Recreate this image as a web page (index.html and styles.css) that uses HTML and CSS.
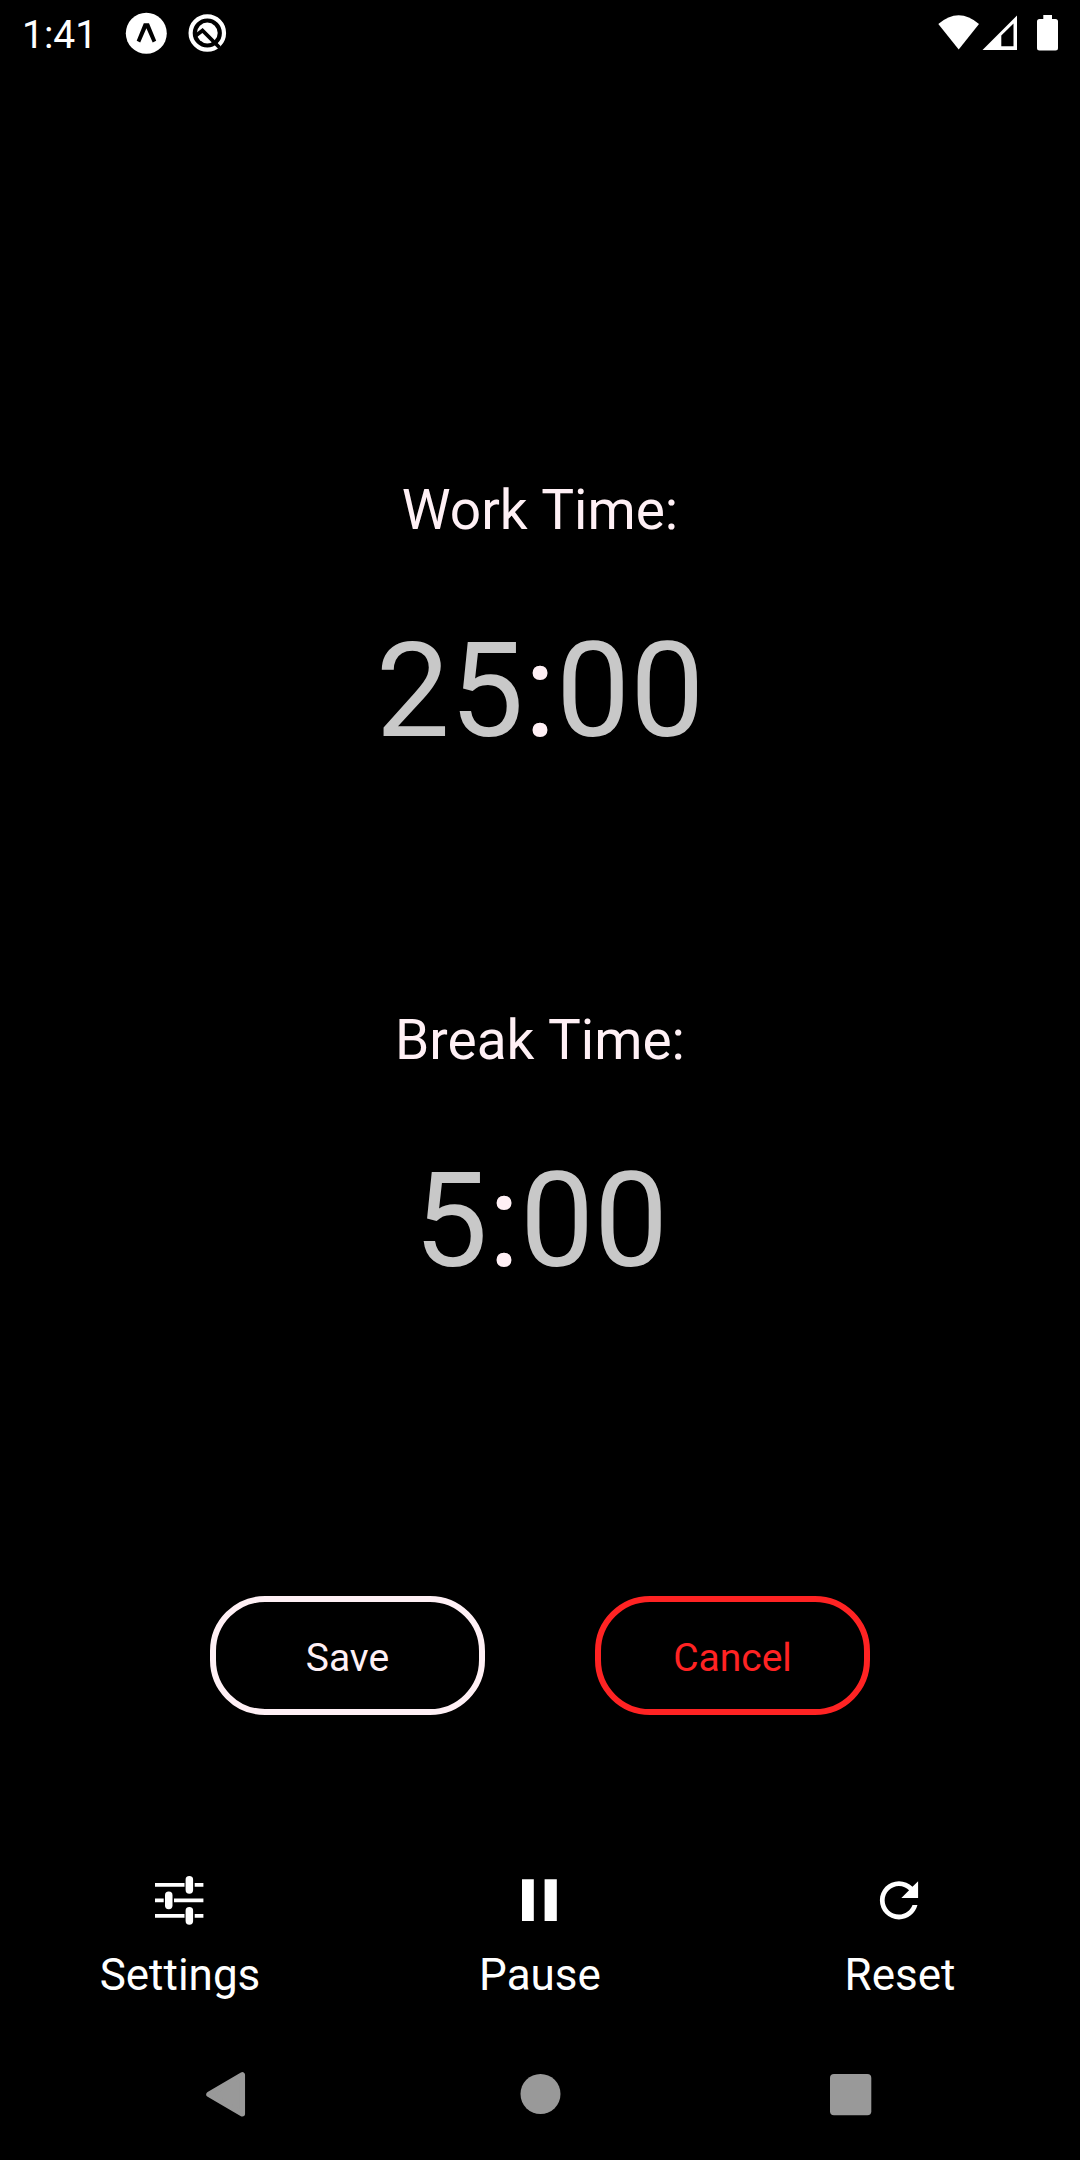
FILE: index.html
```html
<!DOCTYPE html>
<html lang="en">
<head>
<meta charset="utf-8">
<title>Timer settings</title>
<link rel="stylesheet" href="styles.css">
</head>
<body>
<div class="screen">
  <header class="status">
    <span class="clock">1:41</span>
    <svg class="notices" width="120" height="68" viewBox="120 0 120 68">
      <circle cx="146.3" cy="33.3" r="20.5" fill="#fff"/>
      <path d="M143.800 23.300h5.200L156.200 40.800L152.700 42.400L146.400 28.300L140.200 42.400L136.700 40.800z" fill="#000"/>
      <circle cx="207.3" cy="33" r="16.7" fill="none" stroke="#fff" stroke-width="4.2"/>
      <circle cx="207.3" cy="33" r="10.4" fill="#fff"/>
      <path d="M196 35.500L202.500 30.500L219.500 47.500" fill="none" stroke="#000" stroke-width="3.800"/>
    </svg>
    <svg class="system" width="130" height="68" viewBox="930 0 130 68">
      <path d="M938.3 24Q958.7 6.5 979 24L958.7 49.5z" fill="#fff"/>
      <path d="M982.5 50L1017 15.5V50z" fill="#fff"/>
      <path d="M1001.3 35.5L1013.5 23.5V46.3H1001.3z" fill="#000"/>
      <path d="M1043.3 15h8.7v4h3.5q2.5 0 2.5 2.5v26.5q0 2.5-2.5 2.5h-16q-2.5 0-2.5-2.5v-26.500q0-2.500 2.500-2.500h3.800z" fill="#fff"/>
    </svg>
  </header>
  <main class="timers">
    <section class="timer">
      <h2 class="label">Work Time:</h2>
      <div class="time"><span class="digits">25</span>:<span class="digits">00</span></div>
    </section>
    <section class="timer">
      <h2 class="label">Break Time:</h2>
      <div class="time short"><span class="digits">5</span>:<span class="digits">00</span></div>
    </section>
  </main>
  <div class="actions">
    <button class="button">Save</button>
    <button class="button cancel">Cancel</button>
  </div>
  <nav class="tabs">
    <div class="tab">
      <svg width="60" height="60" viewBox="150 1870 60 60" fill="#fff">
        <path d="M155 1883h29.500v3.800H155zM194.700 1883h8.700v3.800h-8.700zM155 1898.500h8.700v3.800H155zM174 1898.500h29.400v3.800H174zM155 1914h29.500v3.800H155zM194.700 1914h8.700v3.800h-8.700z"/>
        <rect x="185.600" y="1876" width="7.500" height="17.800" rx="3.700"/>
        <rect x="165" y="1891.500" width="7.500" height="17.800" rx="3.700"/>
        <rect x="185.600" y="1907" width="7.500" height="17.800" rx="3.700"/>
      </svg>
      <span>Settings</span>
    </div>
    <div class="tab">
      <svg width="60" height="60" viewBox="510 1870 60 60" fill="#fff">
        <path d="M522 1879.300h11.800v41.700H522zM544.600 1879.300h12.200v41.700h-12.200z"/>
      </svg>
      <span>Pause</span>
    </div>
    <div class="tab">
      <svg width="60" height="60" viewBox="870 1870 60 60" fill="#fff">
        <path transform="translate(870.300 1871.600) scale(2.390)" d="M17.650 6.350C16.200 4.900 14.210 4 12 4c-4.420 0-7.990 3.580-7.990 8s3.570 8 7.990 8c3.730 0 6.840-2.550 7.730-6h-2.080c-.82 2.330-3.040 4-5.650 4-3.310 0-6-2.690-6-6s2.690-6 6-6c1.660 0 3.140.69 4.220 1.780L13 11h7V4l-2.350 2.350z"/>
      </svg>
      <span>Reset</span>
    </div>
  </nav>
  <footer class="system-nav">
    <svg width="60" height="60" viewBox="196 2064 60 60"><path d="M209 2094.300L242.300 2075V2113.800z" fill="#999" stroke="#999" stroke-width="5.500" stroke-linejoin="round"/></svg>
    <svg width="60" height="60" viewBox="508.500 2064 60 60"><circle cx="540" cy="2094" r="20" fill="#999"/></svg>
    <svg width="60" height="60" viewBox="821 2064 60 60"><rect x="830" y="2074" width="41.300" height="41.300" rx="4" fill="#999"/></svg>
  </footer>
</div>
</body>
</html>
```
FILE: styles.css
```css
* { box-sizing: border-box; }
body { margin: 0; background: #000; }
.screen {
  display: flex;
  flex-direction: column;
  width: 1080px;
  height: 2160px;
  background: #000;
  color: #fff;
  font-family: Roboto, sans-serif;
}
.status {
  display: flex;
  height: 68px;
  padding: 0 20px 0 22px;
}
.clock {
  width: 98px;
  padding-top: 12px;
  font-size: 39px;
  line-height: 46px;
}
.system { margin-left: auto; }
.timers {
  display: flex;
  flex-direction: column;
  height: 1528px;
  padding-top: 410px;
  color: #fff0f5;
}
.timer {
  height: 530px;
  text-align: center;
}
.label {
  margin: 0 0 71px;
  font-size: 55px;
  font-weight: 400;
  line-height: 64px;
  word-spacing: 1px;
}
.time {
  font-size: 132px;
  line-height: 156px;
}
.short { padding-left: 2px; }
.digits { color: #c8c8c8; }
.actions {
  display: flex;
  justify-content: center;
  gap: 110px;
  height: 274px;
}
.button {
  width: 275px;
  height: 119px;
  padding: 5px 0 0;
  border: 6px solid #fff0f5;
  border-radius: 55px;
  background: none;
  color: #fff0f5;
  font: 39px/46px Roboto, sans-serif;
}
.cancel {
  border-color: #ff2323;
  color: #ff2323;
}
.tabs {
  display: grid;
  grid-template-columns: repeat(3, 360px);
  height: 194px;
  font-size: 44px;
  line-height: 52px;
}
.tab {
  display: flex;
  flex-direction: column;
  align-items: center;
  gap: 19px;
}
.system-nav {
  display: flex;
  justify-content: space-between;
  padding: 0 199px 0 196px;
}
```
